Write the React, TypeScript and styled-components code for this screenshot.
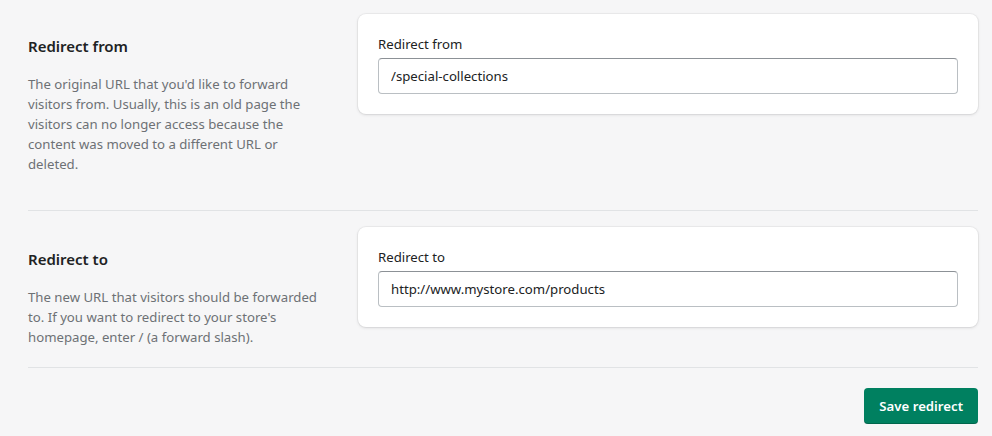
import React from "react";
import styled, { createGlobalStyle } from "styled-components";

const GlobalStyle = createGlobalStyle`
  html, body {
    margin: 0;
    padding: 0;
    background: #f6f6f7;
  }
  body {
    font-family: "Segoe UI", "Noto Sans", "Liberation Sans", sans-serif;
    color: #202223;
    -webkit-font-smoothing: antialiased;
  }
  * { box-sizing: border-box; }
`;

const Page = styled.div`
  padding: 0 14px 0 28px;
`;

const Section = styled.section<{ $top: number; $bottom: number }>`
  display: grid;
  grid-template-columns: 330px 1fr;
  align-items: start;
  padding: ${(p) => p.$top}px 0 ${(p) => p.$bottom}px;
  border-bottom: 1px solid #e1e3e5;
`;

const Annotation = styled.div`
  padding: 20px 32px 0 0;
`;

const Title = styled.h2`
  margin: 0;
  font-size: 15px;
  line-height: 24px;
  font-weight: 600;
  color: #202223;
`;

const Description = styled.p`
  margin: 16px 0 0;
  font-size: 13.2px;
  line-height: 20px;
  color: #6d7175;
`;

const Card = styled.div`
  background: #ffffff;
  border-radius: 8px;
  padding: 20px;
  box-shadow: 0 0 0 1px rgba(63, 63, 68, 0.05), 0 1px 3px rgba(63, 63, 68, 0.15);
`;

const Label = styled.label`
  display: block;
  font-size: 13.2px;
  line-height: 20px;
  color: #202223;
  margin-bottom: 4px;
`;

const Input = styled.input`
  display: block;
  width: 100%;
  height: 36px;
  padding: 0 12px;
  font: inherit;
  font-size: 13.2px;
  color: #202223;
  background: #ffffff;
  border: 1px solid #babfc3;
  border-top-color: #8c9196;
  border-radius: 4px;
  outline: none;
`;

const Footer = styled.div`
  display: flex;
  justify-content: flex-end;
  padding-top: 20px;
`;

const PrimaryButton = styled.button`
  height: 36px;
  padding: 0 15px;
  border: none;
  border-radius: 4px;
  background: #008060;
  color: #ffffff;
  font: inherit;
  font-size: 13.2px;
  font-weight: 600;
  box-shadow: inset 0 -1px 0 rgba(0, 0, 0, 0.2), 0 1px 0 rgba(0, 0, 0, 0.08);
  cursor: pointer;
`;

type FieldSection = {
  id: string;
  title: string;
  description: string;
  value: string;
  top: number;
  bottom: number;
};

const sections: FieldSection[] = [
  {
    id: "from",
    title: "Redirect from",
    description:
      "The original URL that you'd like to forward visitors from. Usually, this is an old page the visitors can no longer access because the content was moved to a different URL or deleted.",
    value: "/special-collections",
    top: 14,
    bottom: 36,
  },
  {
    id: "to",
    title: "Redirect to",
    description:
      "The new URL that visitors should be forwarded to. If you want to redirect to your store's homepage, enter / (a forward slash).",
    value: "http://www.mystore.com/products",
    top: 16,
    bottom: 20,
  },
];

export default function App() {
  return (
    <>
      <GlobalStyle />
      <Page>
        {sections.map((s) => (
          <Section key={s.id} $top={s.top} $bottom={s.bottom}>
            <Annotation>
              <Title>{s.title}</Title>
              <Description>{s.description}</Description>
            </Annotation>
            <Card>
              <Label htmlFor={`redirect-${s.id}`}>{s.title}</Label>
              <Input id={`redirect-${s.id}`} defaultValue={s.value} />
            </Card>
          </Section>
        ))}
        <Footer>
          <PrimaryButton>Save redirect</PrimaryButton>
        </Footer>
      </Page>
    </>
  );
}
